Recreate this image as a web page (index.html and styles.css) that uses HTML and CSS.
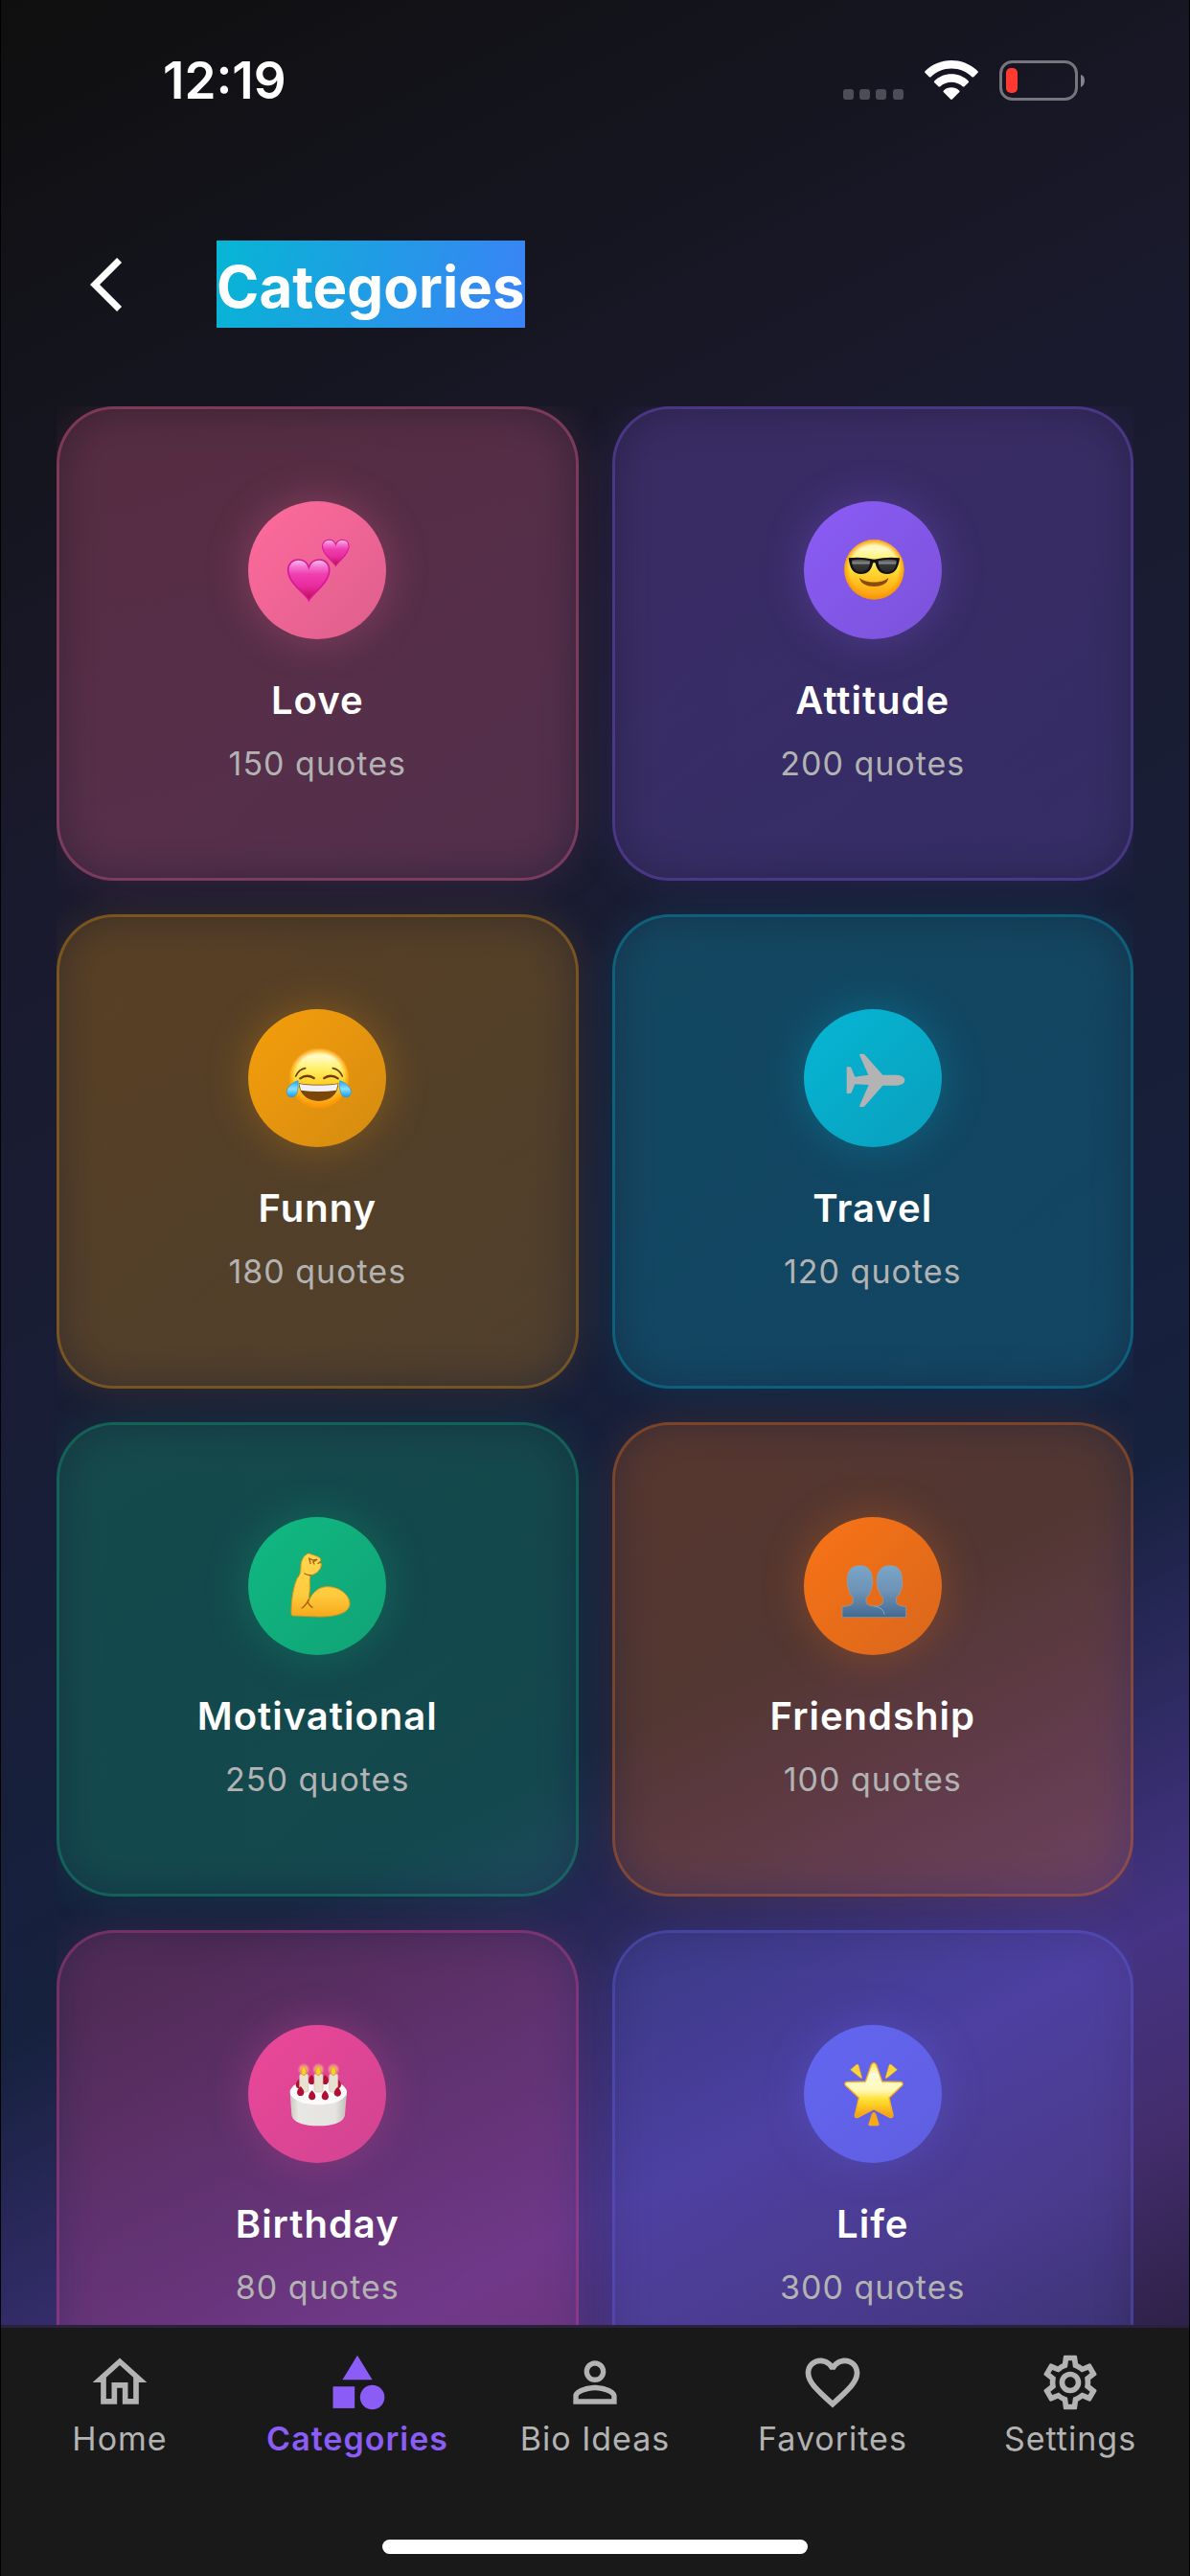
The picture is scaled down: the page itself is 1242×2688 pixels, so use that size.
FILE: index.html
```html
<!DOCTYPE html>
<html lang="en">
<head>
<meta charset="utf-8">
<meta name="viewport" content="width=device-width, initial-scale=1">
<title>Categories</title>
<link rel="stylesheet" href="styles.css">
</head>
<body>
<div class="app">
  <div class="view">
    <div class="status">
      <span class="time">12:19</span>
      <div class="status-icons">
        <svg class="signal" viewBox="0 0 63 42" aria-hidden="true"><g fill="#4d4c57"><rect x="0" y="30" width="11" height="11" rx="3"/><rect x="17" y="30" width="11" height="11" rx="3"/><rect x="34" y="30" width="11" height="11" rx="3"/><rect x="52" y="30" width="11" height="11" rx="3"/></g></svg>
        <svg class="wifi" viewBox="0 0 56 42" aria-hidden="true"><path fill="#fff" d="M28 0C17.500 0 7.500 4.200 0.500 11.300Q-.3 12.200.6 13.100L4.800 17.200Q5.700 18 6.600 17.200C12.200 11.700 19.800 8.600 28 8.600S43.800 11.700 49.400 17.200Q50.300 18 51.200 17.200L55.400 13.100Q56.300 12.200 55.500 11.300C48.500 4.200 38.500 0 28 0ZM28 14.300C21.300 14.300 15 16.900 10.300 21.400Q9.400 22.300 10.300 23.200L14.500 27.200Q15.400 28 16.300 27.200C19.400 24.300 23.600 22.700 28 22.700S36.600 24.300 39.700 27.200Q40.600 28 41.500 27.200L45.700 23.200Q46.600 22.300 45.700 21.400C41 16.900 34.700 14.300 28 14.300ZM28 28.300C24.900 28.300 22 29.500 19.900 31.500Q19 32.400 19.900 33.300L27.100 40.500Q28 41.400 28.900 40.500L36.100 33.300Q37 32.400 36.100 31.500C34 29.500 31.100 28.300 28 28.300Z"/></svg>
        <svg class="battery" viewBox="0 0 90 42" aria-hidden="true"><rect x="1.500" y="1.500" width="79" height="39" rx="12" fill="none" stroke="#76757e" stroke-width="3"/><path fill="#85848c" d="M85 15Q89 16 89 21T85 28Z"/><rect x="7" y="8" width="12" height="26" rx="5" fill="#ff3a30"/></svg>
      </div>
    </div>

    <header class="header">
      <button class="back" type="button" aria-label="Back"><svg viewBox="0 0 12 24" aria-hidden="true"><path d="M11.670 3.870 9.900 2.100 0 12l9.900 9.900 1.770-1.770L3.540 12z"/></svg></button>
      <h1 class="title">Categories</h1>
    </header>

    <main class="list">
      <a class="card love" href="#love">
        <span class="disc"><svg viewBox="57 69 432 432" aria-hidden="true">
          <defs><linearGradient id="heart" x1="0" y1="0" x2="0" y2="1"><stop offset="0" stop-color="#f8c4ec"/><stop offset=".18" stop-color="#f474ce"/><stop offset=".36" stop-color="#f03fb0"/><stop offset=".65" stop-color="#e92b9e"/><stop offset="1" stop-color="#be0a50"/></linearGradient>
          <path id="heart-shape" d="M247 379C236 358 182 325 182 285C182 265 196 252 214 252C230 252 242 261 247 276C252 261 264 252 280 252C298 252 311 265 311 285C311 325 258 358 247 379Z" fill="url(#heart)" stroke="#d8179a" stroke-width="5"/></defs>
          <use href="#heart-shape"/><use href="#heart-shape" transform="translate(172 27) scale(.645)"/>
        </svg></span>
        <span class="name">Love</span><span class="count">150 quotes</span>
      </a>

      <a class="card attitude" href="#attitude">
        <span class="disc"><svg viewBox="57 69 432 432" aria-hidden="true">
          <defs><linearGradient id="face" x1="0" y1="0" x2="0" y2="1"><stop offset="0" stop-color="#ffef80"/><stop offset=".14" stop-color="#fffbc8"/><stop offset=".34" stop-color="#fff16a"/><stop offset=".55" stop-color="#ffd52f"/><stop offset=".8" stop-color="#ffb51c"/><stop offset="1" stop-color="#fb9a12"/></linearGradient>
          <radialGradient id="rim"><stop offset=".8" stop-color="#f90" stop-opacity="0"/><stop offset="1" stop-color="#f59300" stop-opacity=".9"/></radialGradient>
          <linearGradient id="lens" x1="0" y1="0" x2="0" y2="1"><stop offset="0" stop-color="#444"/><stop offset=".32" stop-color="#8a8a8a"/><stop offset=".42" stop-color="#3a3a3a"/><stop offset="1" stop-color="#262626"/></linearGradient></defs>
          <circle cx="277" cy="283" r="93" fill="url(#face)"/><circle cx="277" cy="283" r="94" fill="url(#rim)"/>
          <path d="M197 247C225 243 250 246 277 251C304 246 329 243 357 247L355 259C350 283 340 297 318 297C296 297 285 283 281 263Q277 259 273 263C269 283 258 297 236 297C214 297 203 283 199 259Z" fill="#111"/>
          <path d="M207 254Q236 247 264 256C264 275 254 291 236 291C217 291 208 277 207 254ZM347 254Q318 247 290 256C290 275 300 291 318 291C337 291 346 277 347 254Z" fill="url(#lens)"/>
          <path d="M231 309C252 327 302 327 322 309C318 345 236 345 231 309Z" fill="#8a4a0b"/>
        </svg></span>
        <span class="name">Attitude</span><span class="count">200 quotes</span>
      </a>

      <a class="card funny" href="#funny">
        <span class="disc"><svg viewBox="57 69 432 432" aria-hidden="true">
          <defs><linearGradient id="tear" x1="0" y1="0" x2="0" y2="1"><stop offset="0" stop-color="#1ea4f2"/><stop offset=".5" stop-color="#8be0ff"/><stop offset="1" stop-color="#189df0"/></linearGradient></defs>
          <circle cx="279" cy="285" r="93" fill="url(#face)"/><circle cx="279" cy="285" r="94" fill="url(#rim)"/>
          <g fill="none" stroke="#71380a" stroke-linecap="round"><path stroke-width="5" d="M206 279Q215 258 236 254M352 279Q343 258 322 254"/><path stroke-width="7" d="M220 286Q241 271 263 285M295 285Q317 271 338 286"/></g>
          <path d="M215 301C250 307 308 307 340 301C338 335 315 357 278 357S218 335 215 301Z" fill="#7c4706"/>
          <path d="M217 303C250 309 308 309 338 303L333 323Q278 331 222 323Z" fill="#f0f0f8"/>
          <path id="tear-shape" d="M213 293C195 298 178 314 178 329C178 338 185 345 195 344C209 343 215 326 213 293Z" fill="url(#tear)" stroke="#1b9bea" stroke-width="2"/>
          <use href="#tear-shape" transform="translate(557 0) scale(-1 1)"/>
        </svg></span>
        <span class="name">Funny</span><span class="count">180 quotes</span>
      </a>

      <a class="card travel" href="#travel">
        <span class="disc"><svg viewBox="57 69 432 432" aria-hidden="true">
          <path fill="#b3b3b3" d="M191 250H201Q204 250 205 253L217 281L259 275L231 212Q231 209 234 209H242Q246 209 248 212L304 275H348C364 276 373 283 373 292S364 307 348 308H304L248 372Q246 375 242 375H234Q230 375 231 372L260 306L217 304L206 330Q204 333 201 333H191Z"/>
        </svg></span>
        <span class="name">Travel</span><span class="count">120 quotes</span>
      </a>

      <a class="card motivational" href="#motivational">
        <span class="disc"><svg viewBox="57 69 432 432" aria-hidden="true">
          <defs><linearGradient id="skin" x1="0" y1="0" x2="0" y2="1"><stop offset="0" stop-color="#ffd650"/><stop offset=".65" stop-color="#ffcb3e"/><stop offset="1" stop-color="#f5a91b"/></linearGradient></defs>
          <path d="M247 183C258 188 272 190 283 198Q286 203 281 210L286 216C286 232 273 246 254 251C248 256 250 270 250 285C250 310 246 322 245 336C258 302 280 287 305 287C345 287 375 314 375 340C375 370 330 381 280 381C240 380 215 378 198 378Q191 378 192 368C192 330 198 290 210 262C220 250 222 240 222 225C222 205 232 186 247 183Z" fill="url(#skin)" stroke="#e19616" stroke-width="3"/>
          <path d="M248 198L252 214M248 199L260 204L272 202L260 210L264 216M283 210L276 214M234 246Q243 252 254 251M246 328Q236 348 225 354M245 338Q250 348 258 352" fill="none" stroke="#a7600f" stroke-width="4" stroke-linecap="round" stroke-linejoin="round"/>
        </svg></span>
        <span class="name">Motivational</span><span class="count">250 quotes</span>
      </a>

      <a class="card friendship" href="#friendship">
        <span class="disc"><svg viewBox="57 69 432 432" aria-hidden="true">
          <defs><linearGradient id="busts" x1="0" y1="0" x2="0" y2="1"><stop offset="0" stop-color="#7aa6c9"/><stop offset=".5" stop-color="#6d92b5"/><stop offset="1" stop-color="#456a92"/></linearGradient></defs>
          <path d="M177 383V350C188 348 209 346 211 337V322C201 311 195 296 194 280Q190 277 193 268C192 238 205 221 232 221S272 238 271 268Q275 276 271 280C270 297 263 311 252 322V337C256 346 268 348 279 348S301 346 305 337V322C295 311 288 296 287 280Q283 276 286 268C286 238 300 221 326 221S366 238 364 268Q368 276 365 280C364 297 357 311 346 322V337C350 346 364 348 377 350V383Z" fill="url(#busts)" stroke="#8aa4b5" stroke-width="2"/>
          <path d="M277 348Q307 353 309 374" fill="none" stroke="#7fa8cc" stroke-width="3"/>
        </svg></span>
        <span class="name">Friendship</span><span class="count">100 quotes</span>
      </a>

      <a class="card birthday" href="#birthday">
        <span class="disc"><svg viewBox="57 69 432 432" aria-hidden="true">
          <defs><linearGradient id="cake" x1="0" y1="0" x2="1" y2="0"><stop offset="0" stop-color="#c9c7c1"/><stop offset=".15" stop-color="#e9e7e3"/><stop offset=".8" stop-color="#e6e4e0"/><stop offset="1" stop-color="#bfbdb8"/></linearGradient>
          <radialGradient id="halo"><stop offset="0" stop-color="#ffe68a"/><stop offset=".5" stop-color="#ffc08a" stop-opacity=".7"/><stop offset="1" stop-color="#ffc08a" stop-opacity="0"/></radialGradient>
          <path id="berry" d="M0-15C6-10 11-2 11 5Q9 15 0 15T-11 5C-11-2-6-10 0-15Z" fill="#b20d35"/>
          <g id="candle"><rect x="-13" y="222" width="27" height="57" rx="6" fill="#e9e1cf" stroke="#cbbfa5" stroke-width="2"/><circle cy="208" r="20" fill="url(#halo)"/><path d="M0 197C6 205 9 213 8 219Q5 227 0 227T-8 219C-9 213-6 205 0 197Z" fill="#f6cf2f" stroke="#c99710" stroke-width="2"/></g></defs>
          <path d="M188 279L193 350C196 374 232 385 277 385S357 374 360 350L366 279Z" fill="url(#cake)"/>
          <ellipse cx="277" cy="279" rx="89" ry="40" fill="#fbfbfb"/>
          <use href="#berry" x="217" y="253"/><use href="#berry" x="256" y="240"/><use href="#berry" x="298" y="240"/><use href="#berry" x="337" y="253"/>
          <use href="#candle" x="231"/><use href="#candle" x="277"/><use href="#candle" x="324"/>
          <use href="#berry" x="221" y="276"/><use href="#berry" x="257" y="289"/><use href="#berry" x="298" y="289"/><use href="#berry" x="337" y="278"/>
        </svg></span>
        <span class="name">Birthday</span><span class="count">80 quotes</span>
      </a>

      <a class="card life" href="#life">
        <span class="disc"><svg viewBox="57 69 432 432" aria-hidden="true">
          <defs><linearGradient id="star" x1="0" y1="0" x2="0" y2="1"><stop offset="0" stop-color="#ffe34d"/><stop offset=".2" stop-color="#fffbd8"/><stop offset=".5" stop-color="#fff9b8"/><stop offset=".68" stop-color="#ffdf2e"/><stop offset="1" stop-color="#f39a12"/></linearGradient></defs>
          <g stroke="#f4ab1c" stroke-width="4" stroke-linejoin="round" fill="url(#star)">
          <path d="M268 194Q276 182 284 194L302 246L360 247Q370 250 365 258L324 297L336 352Q335 361 326 358L276 333L226 358Q217 361 217 352L229 297L187 258Q182 250 192 247L250 246Z"/></g>
          <g fill="#ffd43a" stroke="#eaa91c" stroke-width="2" stroke-linejoin="round"><path d="M203 209L222 193Q226 191 228 195L239 235Q234 236 231 232Z"/><path d="M349 209L330 193Q326 191 324 195L312 235Q318 236 321 232Z"/><path fill="#f8a91a" d="M276 343Q280 343 282 348L292 380Q292 384 287 384H264Q259 384 260 380L270 348Q272 343 276 343Z"/></g>
        </svg></span>
        <span class="name">Life</span><span class="count">300 quotes</span>
      </a>
    </main>
  </div>

  <nav class="tabs" aria-label="Main">
    <a class="tab" href="#home"><svg viewBox="0 0 24 24" aria-hidden="true"><path d="M12 5.690l5 4.500V18h-2v-6H9v6H7v-7.810l5-4.500M12 3L2 12h3v8h6v-6h2v6h6v-8h3L12 3z"/></svg><span>Home</span></a>
    <a class="tab active" href="#categories" aria-current="page"><svg viewBox="0 0 24 24" aria-hidden="true"><path d="M12 2l-5.500 9h11z"/><circle cx="17.500" cy="17.500" r="4.500"/><path d="M3 13.500h8v8H3z"/></svg><span>Categories</span></a>
    <a class="tab" href="#bio"><svg viewBox="0 0 24 24" aria-hidden="true"><path d="M12 5.900c1.160 0 2.100.94 2.100 2.100s-.94 2.100-2.100 2.100S9.900 9.160 9.900 8s.94-2.100 2.100-2.100m0 9c2.970 0 6.100 1.460 6.100 2.100v1.100H5.900V17c0-.64 3.130-2.100 6.100-2.100M12 4C9.790 4 8 5.790 8 8s1.790 4 4 4 4-1.790 4-4-1.790-4-4-4zm0 9c-2.670 0-8 1.340-8 4v3h16v-3c0-2.660-5.330-4-8-4z"/></svg><span>Bio Ideas</span></a>
    <a class="tab" href="#favorites"><svg viewBox="0 0 24 24" aria-hidden="true"><path d="M16.500 3c-1.740 0-3.410.81-4.500 2.090C10.910 3.810 9.240 3 7.500 3 4.420 3 2 5.420 2 8.500c0 3.780 3.400 6.860 8.550 11.540L12 21.350l1.450-1.320C18.600 15.360 22 12.280 22 8.500 22 5.420 19.580 3 16.500 3zm-4.400 15.550l-.1.100-.1-.1C7.140 14.240 4 11.390 4 8.500 4 6.500 5.500 5 7.500 5c1.540 0 3.040.99 3.570 2.360h1.870C13.460 5.990 14.960 5 16.500 5c2 0 3.500 1.500 3.500 3.500 0 2.890-3.140 5.740-7.900 10.050z"/></svg><span>Favorites</span></a>
    <a class="tab" href="#settings"><svg viewBox="0 0 24 24" aria-hidden="true"><path d="M19.430 12.980c.04-.32.07-.64.07-.98 0-.34-.03-.66-.07-.98l2.110-1.650c.19-.15.24-.42.12-.64l-2-3.460c-.09-.16-.26-.25-.44-.25-.06 0-.12.010-.17.030l-2.490 1c-.52-.4-1.080-.73-1.690-.98l-.38-2.650C14.460 2.180 14.250 2 14 2h-4c-.25 0-.46.18-.49.42l-.38 2.650c-.61.25-1.170.59-1.690.98l-2.490-1c-.06-.02-.12-.03-.18-.03-.17 0-.34.09-.43.25l-2 3.460c-.13.22-.07.49.12.64l2.110 1.650c-.04.32-.07.65-.07.98 0 .33.030.66.070.98l-2.110 1.650c-.19.15-.24.42-.12.64l2 3.460c.09.16.26.25.44.25.06 0 .12-.01.17-.03l2.490-1c.52.4 1.080.73 1.690.98l.38 2.650c.03.24.24.42.49.42h4c.25 0 .46-.18.49-.42l.38-2.650c.61-.25 1.170-.59 1.690-.98l2.490 1c.06.02.12.03.18.03.17 0 .34-.09.43-.25l2-3.460c.12-.22.07-.49-.12-.64l-2.110-1.650zm-1.980-1.710c.04.31.05.52.05.73 0 .21-.02.43-.05.73l-.14 1.130.89.7 1.080.84-.7 1.210-1.270-.51-1.040-.42-.9.68c-.43.32-.84.56-1.250.73l-1.060.43-.16 1.130-.2 1.350h-1.400l-.19-1.350-.16-1.130-1.060-.43c-.43-.18-.83-.41-1.230-.71l-.91-.7-1.060.43-1.270.51-.7-1.210 1.080-.84.89-.7-.14-1.130c-.03-.31-.05-.54-.05-.74s.02-.43.05-.73l.14-1.130-.89-.7-1.080-.84.7-1.210 1.270.51 1.040.42.9-.68c.43-.32.84-.56 1.250-.73l1.060-.43.16-1.130.2-1.350h1.390l.19 1.350.16 1.130 1.060.43c.43.18.83.41 1.230.71l.91.7 1.060-.43 1.270-.51.7 1.210-1.070.85-.89.7.14 1.130zM12 8c-2.210 0-4 1.790-4 4s1.790 4 4 4 4-1.790 4-4-1.790-4-4-4zm0 6c-1.100 0-2-.9-2-2s.9-2 2-2 2 .9 2 2-.9 2-2 2z"/></svg><span>Settings</span></a>
    <div class="home-bar"></div>
  </nav>
</div>
</body>
</html>
```

FILE: styles.css
```css
* {
  box-sizing: border-box;
}

body {
  margin: 0;
  background: #000;
  color: #fff;
  font-family: Inter, "Liberation Sans", sans-serif;
}

a {
  color: inherit;
  text-decoration: none;
}

svg {
  display: block;
}

.app {
  display: flex;
  flex-direction: column;
  height: 100vh;
  padding: 0 1px;
}

.view {
  flex: 1;
  min-height: 0;
  display: flex;
  flex-direction: column;
  background: linear-gradient(153deg, #0f0f0f 0%, #1a1a2e 31%, #16213e 70%, #453383 86%, #432d6c 93%, #2d2148 100%);
}

/* Status bar */
.status {
  display: flex;
  justify-content: space-between;
  align-items: center;
  padding: 54px 108px 54px 169px;
}

.time {
  font-size: 53px;
  line-height: 60px;
  font-weight: 600;
}

.status-icons {
  display: flex;
  gap: 22px;
}

.status-icons svg {
  height: 42px;
}

/* Header */
.header {
  display: flex;
  align-items: center;
  gap: 98px;
  padding: 83px 93px 82px;
}

.back {
  padding: 0;
  border: 0;
  background: none;
}

.back svg {
  width: 34px;
  height: 68px;
  fill: #fff;
}

.title {
  margin: 0;
  padding-top: 6px;
  background: linear-gradient(106deg, #06b6d4, #3b82f6);
  font-size: 60px;
  line-height: 85px;
  font-weight: 700;
}

/* Category grid */
.list {
  flex: 1;
  min-height: 0;
  margin: 0 58px;
  overflow: hidden;
  display: grid;
  grid-template-columns: 1fr 1fr;
  align-content: start;
  gap: 35px;
}

.card {
  position: relative;
  isolation: isolate;
  aspect-ratio: 11 / 10;
  display: flex;
  flex-direction: column;
  align-items: center;
  padding-top: 96px;
  border: 3px solid rgb(var(--tint) / .3);
  border-radius: 60px;
  background: linear-gradient(138deg, rgb(var(--tint) / .16), rgb(var(--tint) / .12)) border-box;
}

/* Soft glow that shows through and around the translucent card */
.card::before {
  content: "";
  position: absolute;
  z-index: -1;
  inset: 0;
  border-radius: 60px;
  background: rgb(var(--tint) / .15);
  filter: blur(22px);
}

.love { --tint: 255 107 157; }
.attitude { --tint: 139 92 246; }
.funny { --tint: 245 158 11; }
.travel { --tint: 6 182 212; }
.motivational { --tint: 16 185 129; }
.friendship { --tint: 249 115 22; }
.birthday { --tint: 236 72 153; }
.life { --tint: 99 102 241; }

.disc {
  width: 144px;
  height: 144px;
  margin-bottom: 40px;
  border-radius: 50%;
  background: linear-gradient(135deg, rgb(var(--tint)), rgb(var(--tint) / .8));
  box-shadow: 0 0 45px rgb(var(--tint) / .3);
}

.name {
  margin-bottom: 21px;
  font-size: 40px;
  line-height: 48px;
  font-weight: 600;
  letter-spacing: 1px;
}

.count {
  color: #b3b3b3;
  font-size: 34px;
  line-height: 42px;
  letter-spacing: 1px;
}

/* Bottom tabs */
.tabs {
  display: grid;
  grid-template-columns: repeat(5, 1fr);
  row-gap: 84px;
  padding: 23px 0;
  border-top: 3px solid #2a203f;
  background: #191919;
}

.tab {
  display: flex;
  flex-direction: column;
  align-items: center;
  gap: 4px;
  color: #b3b3b3;
  font-size: 34px;
  line-height: 42px;
  letter-spacing: 1px;
}

.tab svg {
  width: 68px;
  height: 68px;
  fill: currentColor;
}

.active {
  color: #8b5cf6;
  font-weight: 600;
}

.home-bar {
  grid-column: 1 / -1;
  justify-self: center;
  width: 444px;
  height: 15px;
  border-radius: 8px;
  background: #fff;
}
```
